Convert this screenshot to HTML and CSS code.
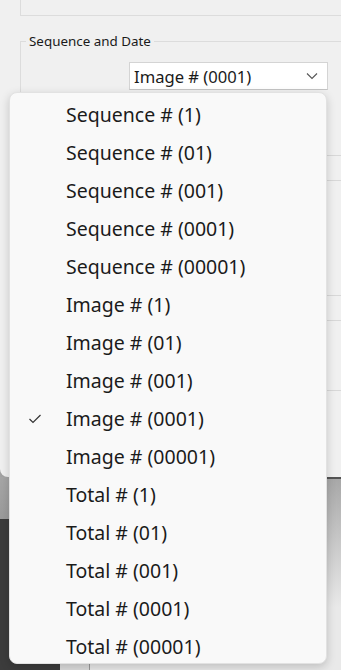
FILE: index.html
```html
<!DOCTYPE html>
<html lang="en">
<head>
  <meta charset="UTF-8">
  <title>Sequence and Date</title>
  <link rel="stylesheet" href="styles.css">
</head>
<body>
  <div class="dialog">
    <div class="prev-group"></div>

    <fieldset class="group">
      <legend>Sequence and Date</legend>
      <div class="row">
        <div class="combo">
          <span>Image # (0001)</span>
          <svg width="12" height="8" viewBox="0 0 12 8"><polyline points="1,1.5 6,6.5 11,1.5" fill="none" stroke="#555" stroke-width="1.1"/></svg>
        </div>
      </div>
      <div class="field f1"></div>
      <div class="field f2"></div>
      <div class="field f3"></div>
    </fieldset>
  </div>

  <div class="behind">
    <div class="win-a"></div>
    <div class="win-b"></div>
    <div class="win-c"></div>
  </div>

  <ul class="menu">
    <li>Sequence # (1)</li>
    <li>Sequence # (01)</li>
    <li>Sequence # (001)</li>
    <li>Sequence # (0001)</li>
    <li>Sequence # (00001)</li>
    <li>Image # (1)</li>
    <li>Image # (01)</li>
    <li>Image # (001)</li>
    <li class="checked">
      <svg class="tick" width="14" height="12" viewBox="0 0 14 12"><polyline points="1.5,6 5,9.5 12.5,2" fill="none" stroke="#333" stroke-width="1.2"/></svg>
      Image # (0001)
    </li>
    <li>Image # (00001)</li>
    <li>Total # (1)</li>
    <li>Total # (01)</li>
    <li>Total # (001)</li>
    <li>Total # (0001)</li>
    <li>Total # (00001)</li>
  </ul>
</body>
</html>
```

FILE: styles.css
```css
body { margin: 0; background: #a3a3a3; font-family: "Noto Sans", "Open Sans", sans-serif; color: #1a1a1a; overflow: hidden; }

.dialog { height: 477px; background: #f0f0f0; border-bottom-left-radius: 8px; overflow: hidden; }
.prev-group { height: 15px; margin-left: 20px; border-left: 1px solid #dcdcdc; border-bottom: 1px solid #dcdcdc; }

.group { margin: 16px 0 0 20px; padding: 0; border: 1px solid #dcdcdc; border-right: none; }
.group legend { margin-left: 5px; padding: 0 3px; font-size: 13.4px; line-height: 18px; color: #1a1a1a; }
.row { padding-left: 108px; margin-top: 12px; }
.combo { width: 199px; height: 28px; box-sizing: border-box; display: flex; align-items: center; justify-content: space-between; padding: 0 9px 0 4px; background: #fff; border: 1px solid #d4d4d4; border-bottom-color: #c4c4c4; font-size: 16.6px; }

.field { margin-left: 108px; border-top: 1px solid #d8d8d8; border-bottom: 1px solid #d8d8d8; height: 24px; }
.f1 { margin-top: 65px; }
.f2 { margin-top: 114px; }
.f3 { margin-top: 69px; height: 0; border-bottom: none; margin-bottom: 120px; }

.behind { height: 193px; display: grid; grid-template-columns: 60px 30px 1fr; }
.win-a { background: linear-gradient(#a6a6a6, #9b9b9b 42px, #3c3c3c 42px); }
.win-b { background: linear-gradient(#a6a6a6 0 42px, #dcdcdc 42px); border-right: 1px solid #9a9a9a; }
.win-c { background: linear-gradient(#545454 0 2px, #a8a8a8 2px, #e9e9e9 130px); }

.menu { position: absolute; top: 92px; left: 9px; width: 318px; height: 572px; box-sizing: border-box; margin: 0; padding: 3px 0 0; list-style: none; background: #f9f9f9; border: 1px solid #e2e2e2; border-radius: 8px; box-shadow: 0 3px 10px rgba(0, 0, 0, 0.18); }
.menu li { position: relative; height: 38px; line-height: 38px; padding-left: 56px; font-size: 19.5px; color: #1b1b1b; }
.tick { position: absolute; left: 18px; top: 13px; }
```
